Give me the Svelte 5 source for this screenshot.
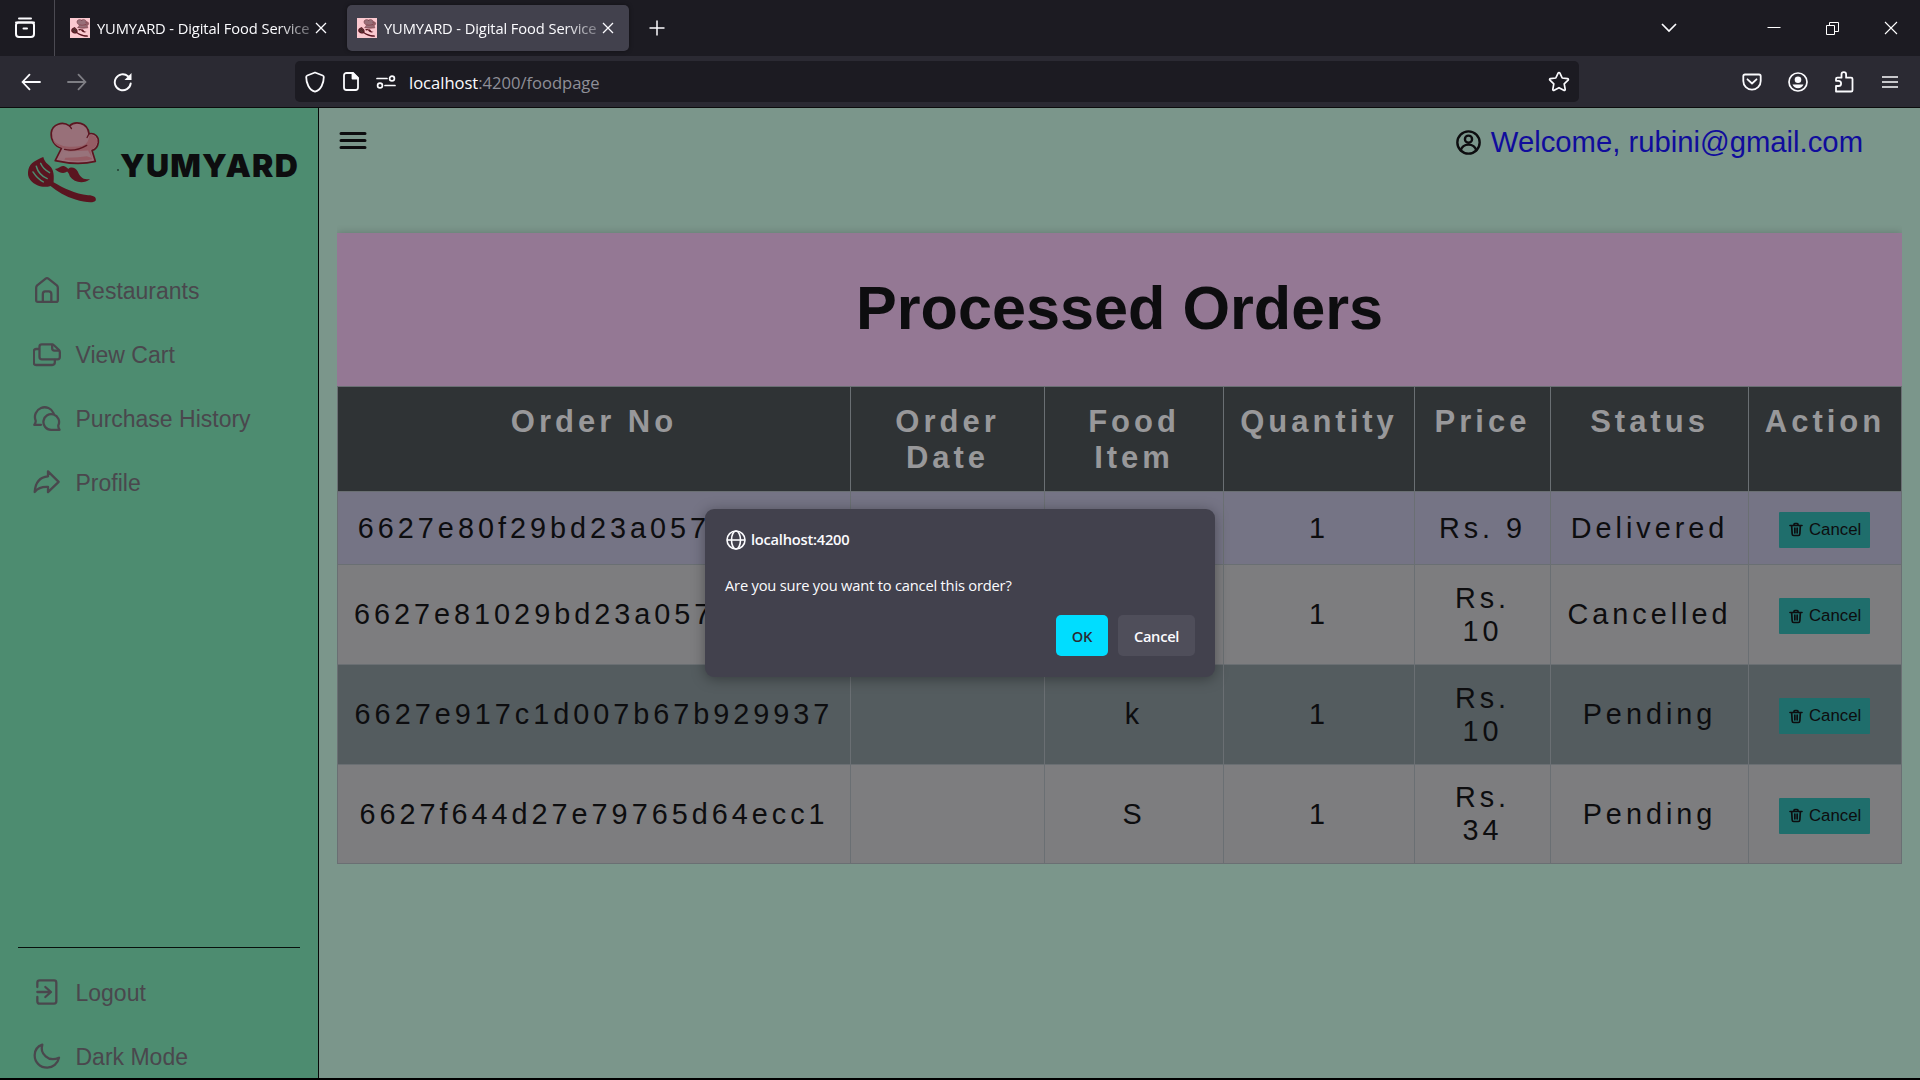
<script>
  const tabs = [{ active: false }, { active: true }];

  const mainLinks = [
    { icon: 'home', label: 'Restaurants' },
    { icon: 'documents', label: 'View Cart' },
    { icon: 'chats', label: 'Purchase History' },
    { icon: 'redo', label: 'Profile' }
  ];
  const footLinks = [
    { icon: 'exit', label: 'Logout' },
    { icon: 'moon', label: 'Dark Mode' }
  ];

  const columns = ['Order No', 'Order Date', 'Food Item', 'Quantity', 'Price', 'Status', 'Action'];
  const orders = [
    { id: '6627e80f29bd23a057b92971', item: 'k', qty: 1, price: 9, status: 'Delivered', tone: 'lilac' },
    { id: '6627e81029bd23a057b92975', item: 'k', qty: 1, price: 10, status: 'Cancelled', tone: 'grey' },
    { id: '6627e917c1d007b67b929937', item: 'k', qty: 1, price: 10, status: 'Pending', tone: 'slate' },
    { id: '6627f644d27e79765d64ecc1', item: 'S', qty: 1, price: 34, status: 'Pending', tone: 'grey' }
  ];
</script>

{#snippet logo()}
  <g stroke-linejoin="round" stroke-linecap="round">
    <path d="M165 182 L184 144 C163 138 151 118 153 98 C156 72 187 62 208 77 C224 62 262 64 267 101 C284 97 297 110 295 127 C293 141 286 149 276 151 L286 184 C247 194 205 191 165 182Z" fill="#987079" stroke="#5c1520" stroke-width="5" />
    <path d="M158 118 C172 139 212 145 247 137 C264 132 266 117 268 105 C276 103 289 108 291 121 C291 138 282 147 271 149 L276 178 C250 184 224 184 193 179 L206 150 L184 143 C169 138 160 128 158 118Z" fill="#955c64" />
    <path d="M193 148 C216 154 239 148 260 136" fill="none" stroke="#5c1520" stroke-width="4" />
    <path d="M208 77 L214 85 M267 101 L261 112" fill="none" stroke="#5c1520" stroke-width="4" />
    <path d="M188 155 L264 151 L276 174 L260 169 L235 172 L178 174Z" fill="#98737b" />
    <path d="M129 171 C132 181 135 186 143 193 C158 204 163 219 160 247 C188 264 225 282 264 286 C282 286 290 293 287 302 C282 311 255 308 226 299 C196 290 171 275 151 258 C133 264 108 261 90 240 C82 230 82 219 84 209 C89 188 109 180 129 171Z" fill="#5a1520" />
    <path d="M121 190 C127 205 137 212 148 218 M108 199 C113 218 128 231 141 236 M98 216 C107 230 117 240 129 246" fill="none" stroke="#4d8c70" stroke-width="4.500" />
    <path d="M164 207 C177 207 181 195 193 199 C200 202 202 205 204 207 C213 199 226 202 233 215 C240 232 250 242 270 237 C251 254 222 248 209 229 C207 224 205 218 201 215 C192 222 177 220 164 207Z" fill="#5a1520" />
  </g>
{/snippet}

{#snippet icon(name)}
  <svg class="icon" viewBox="0 0 84 84" fill="none" stroke="currentColor" stroke-width="6.800" stroke-linecap="round" stroke-linejoin="round">
    {#if name === 'home'}
      <path d="M9.500 32q0-4 3-7L38 5q4-3 8 0l25.500 20q3 3 3 7v37.500q0 5-5 5h-55q-5 0-5-5Z" />
      <path d="M29.500 74V51q0-8 7-8h11q7.500 0 7.500 8v23" />
    {:else if name === 'documents'}
      <path d="M18 24h-8q-7.500 0-7.500 7v34q0 7 7 7h48q8 0 8-8v-7" />
      <path d="M26.500 10H57q3 0 5 2l16 15q2.500 2.500 2.500 6v15q0 7-7 7h-47q-7 0-7-7V17q0-7 7-7Z" />
      <path d="M57.500 12v10q0 7 7 7H77" />
    {:else if name === 'chats'}
      <path d="M62 25A29 29 0 1 0 8 47q1 5-4 12.500h20" />
      <path d="M54 74.500A23.500 23.500 0 1 1 76 61q-1 5 3.500 13.500Z" />
    {:else if name === 'redo'}
      <path d="M45 7l32 31.500L45 69.500V54C28 53 15 57 5 69 7 41 21 24 45 22Z" />
    {:else if name === 'exit'}
      <path d="M13 24V11q0-7 7-7h43q7 0 7 7v56q0 7-7 7H20q-7 0-7-7V54" />
      <path d="M13 39h40M37 24l17 15-17 15" />
    {:else if name === 'moon'}
      <path d="M28 5C24 18 27 31 38 40c10 9 25 11 40 4-4 18-18 30-35 30C21 74 5 58 5 37 5 22 14 10 28 5Z" />
    {:else if name === 'trash'}
      <g stroke-width="10"><path d="M16 20l3 49q.5 9 9 9h28q8.500 0 9-9l3-49M6 18h72M30 16v-6q0-4 5-4h14q5 0 5 4v6M35 34v29M49 34v29" /></g>
    {:else if name === 'person'}
      <g stroke-width="8"><circle cx="42" cy="42" r="37.500" /><circle cx="42" cy="31" r="12" /><path d="M16 68C20 54 30 49 42 49s22 5 26 19" /></g>
    {/if}
  </svg>
{/snippet}

<div class="window">
  <header class="tabbar">
    <div class="recent">
      <svg width="22" height="22" viewBox="0 0 22 22" fill="none" stroke="#fbfbfe" stroke-width="2" stroke-linecap="round">
        <path d="M5 1.500h12M2 5.500h18" />
        <path d="M2 8v9a3 3 0 0 0 3 3h12a3 3 0 0 0 3-3V8a2.500 2.500 0 0 0-2.500-2.500h-13A2.500 2.500 0 0 0 2 8Z" />
        <path d="M9.500 11.500h3.500" />
      </svg>
    </div>
    {#each tabs as tab}
      <div class="tab" class:active={tab.active}>
        <svg class="favicon" viewBox="68 48 244 276" preserveAspectRatio="none">
          <rect x="68" y="48" width="244" height="276" fill="#fbc9d0" />
          {@render logo()}
        </svg>
        <span class="tab-title">YUMYARD - Digital Food Service</span>
        <svg class="tab-close" width="12" height="12" viewBox="0 0 12 12" stroke="#fbfbfe" stroke-width="1.300"><path d="M1 1l10 10M11 1L1 11" /></svg>
      </div>
    {/each}
    <svg class="plus" width="16" height="16" viewBox="0 0 16 16" stroke="#fbfbfe" stroke-width="1.500"><path d="M8 .5v15M.5 8h15" /></svg>
    <div class="controls">
      <svg width="18" height="12" viewBox="0 0 18 12" fill="none" stroke="#fbfbfe" stroke-width="1.700"><path d="M2 2l7 7 7-7" /></svg>
      <svg width="14" height="14" viewBox="0 0 14 14" stroke="#fff"><path d="M.5 6.500h13" /></svg>
      <svg width="13" height="14" viewBox="0 0 13 14" fill="none" stroke="#fff"><path d="M.5 4.500h8v9h-8zM3.500 4.500v-3h9v9h-4" /></svg>
      <svg width="14" height="14" viewBox="0 0 14 14" stroke="#fff" stroke-width="1.100"><path d="M1 1l12 12M13 1L1 13" /></svg>
    </div>
  </header>

  <nav class="toolbar">
    <div class="history">
      <svg width="20" height="18" viewBox="0 0 20 18" fill="none" stroke="#fbfbfe" stroke-width="1.800" stroke-linecap="round" stroke-linejoin="round"><path d="M19 9H1.500M8.500 1.700L1.500 9l7 7.300" /></svg>
      <svg class="dim" width="20" height="18" viewBox="0 0 20 18" fill="none" stroke="#fbfbfe" stroke-width="1.800" stroke-linecap="round" stroke-linejoin="round"><path d="M1 9h17.500M11.500 1.700l7 7.300-7 7.300" /></svg>
      <svg width="20" height="20" viewBox="0 0 20 20" fill="none" stroke="#fbfbfe" stroke-width="1.900" stroke-linecap="round"><path d="M17.700 11.500A8 8 0 1 1 15 4.200" /><path d="M18.500 1v7h-7z" fill="#fbfbfe" stroke="none" /></svg>
    </div>
    <div class="urlbar">
      <svg width="20" height="22" viewBox="0 0 20 22" fill="none" stroke="#fbfbfe" stroke-width="1.800" stroke-linejoin="round"><path d="M10 1.500l7.700 3c.8.300 1.100.8 1.100 1.500C18.800 12 16 19 10 20.700 4 19 1.200 12 1.200 6c0-.7.300-1.200 1.100-1.500z" /></svg>
      <svg width="16" height="19" viewBox="0 0 16 19" fill="none" stroke="#fbfbfe" stroke-width="1.800" stroke-linejoin="round"><path d="M3.500 1H10l5 5v9.500a2.500 2.500 0 0 1-2.500 2.500h-9A2.500 2.500 0 0 1 1 15.500v-12A2.500 2.500 0 0 1 3.500 1Z" /><path d="M9.500 1v5.500H15z" fill="#fbfbfe" /></svg>
      <svg width="20" height="14" viewBox="0 0 20 14" fill="none" stroke="#fbfbfe" stroke-width="1.700" stroke-linecap="round"><path d="M1 3.500h10M9 10.500h10" /><circle cx="16" cy="3.500" r="2.400" /><circle cx="4" cy="10.500" r="2.400" /></svg>
      <span class="url"><b>localhost</b>:4200/foodpage</span>
      <svg class="star" width="22" height="21" viewBox="0 0 22 21" fill="none" stroke="#fbfbfe" stroke-width="1.700" stroke-linejoin="round"><path d="M11 1.500c.4 0 .7.200.9.600l2.300 4.900 5.300.6c.9.100 1.200 1 .6 1.600l-3.900 3.700 1 5.400c.1.900-.7 1.400-1.400 1L11 16.700l-4.800 2.600c-.7.400-1.500-.1-1.400-1l1-5.400L1.900 9.200c-.6-.6-.3-1.500.6-1.600L7.800 7l2.300-4.900c.2-.4.500-.6.900-.6Z" /></svg>
    </div>
    <div class="extras">
      <svg width="20" height="18" viewBox="0 0 20 18" fill="none" stroke="#fbfbfe" stroke-width="1.800" stroke-linecap="round" stroke-linejoin="round"><path d="M3 1.500h14c1.100 0 1.700.7 1.700 1.700V8a8.700 8.700 0 0 1-17.400 0V3.200c0-1 .6-1.700 1.700-1.700Z" /><path d="M5.500 6.300L10 10.500l4.500-4.200" /></svg>
      <svg width="20" height="20" viewBox="0 0 20 20" fill="none" stroke="#fbfbfe" stroke-width="1.700"><circle cx="10" cy="10" r="9" /><circle cx="10" cy="7.700" r="3.300" fill="#fbfbfe" stroke="none" /><path d="M4.500 12.500h11c-.8 2.200-3 3.800-5.500 3.800s-4.700-1.600-5.500-3.800Z" fill="#fbfbfe" stroke="none" /></svg>
      <svg width="20" height="22" viewBox="0 0 20 22" fill="none" stroke="#fbfbfe" stroke-width="1.800" stroke-linejoin="round"><path d="M2 20.500V15h2.500a2.600 2.600 0 0 0 0-5.200H2V8c0-.8.500-1.300 1.300-1.300h4.200V3.500a2.300 2.300 0 0 1 4.600 0v3.200h5c.9 0 1.400.5 1.400 1.300v11.200c0 .9-.5 1.300-1.400 1.300Z" /></svg>
      <svg width="16" height="14" viewBox="0 0 16 14" stroke="#fbfbfe" stroke-width="1.500"><path d="M0 2h16M0 7h16M0 12h16" /></svg>
    </div>
  </nav>

  <div class="app">
    <aside>
      <div class="brand">
        <svg class="brand-logo" viewBox="80 60 220 252">{@render logo()}</svg>
        <span class="brand-dot"></span>
        <span class="brand-name">YUMYARD</span>
      </div>
      <ul class="links">
        {#each mainLinks as link}
          <li>{@render icon(link.icon)}<span>{link.label}</span></li>
        {/each}
      </ul>
      <ul class="links foot">
        {#each footLinks as link}
          <li>{@render icon(link.icon)}<span>{link.label}</span></li>
        {/each}
      </ul>
    </aside>

    <main>
      <div class="topline">
        <svg class="burger" width="28" height="18" viewBox="0 0 28 18" stroke="#0d0d0f" stroke-width="3" stroke-linecap="round"><path d="M2 1.500h24M2 8.500h24M2 15.500h24" /></svg>
        <div class="welcome">{@render icon('person')}<span>Welcome, rubini@gmail.com</span></div>
      </div>

      <section class="orders">
        <h1>Processed Orders</h1>
        <table>
          <colgroup>
            <col class="c-id" /><col class="c-date" /><col class="c-item" /><col class="c-qty" /><col class="c-price" /><col class="c-status" /><col class="c-action" />
          </colgroup>
          <thead>
            <tr>
              {#each columns as column}<th>{column}</th>{/each}
            </tr>
          </thead>
          <tbody>
            {#each orders as order}
              <tr class={order.tone}>
                <td>{order.id}</td>
                <td></td>
                <td>{order.item}</td>
                <td>{order.qty}</td>
                <td>Rs. {order.price}</td>
                <td>{order.status}</td>
                <td><button class="cancel">{@render icon('trash')}<span>Cancel</span></button></td>
              </tr>
            {/each}
          </tbody>
        </table>
      </section>
    </main>
  </div>

  <div class="dialog">
    <div class="origin">
      <svg width="20" height="20" viewBox="0 0 20 20" fill="none" stroke="#fbfbfe" stroke-width="1.600"><circle cx="10" cy="10" r="9" /><ellipse cx="10" cy="10" rx="4.500" ry="9" /><path d="M1 10h18" /></svg>
      <span>localhost:4200</span>
    </div>
    <p>Are you sure you want to cancel this order?</p>
    <div class="actions">
      <button class="ok">OK</button>
      <button class="dismiss">Cancel</button>
    </div>
  </div>
</div>

<style>
  :global(body) { margin: 0; background: #000; overflow: hidden; }
  * { box-sizing: border-box; }
  svg { display: block; flex: none; }
  button { border: 0; margin: 0; padding: 0; font: inherit; }

  .window {
    position: relative;
    display: flex;
    flex-direction: column;
    width: 1920px;
    height: 1080px;
    padding-bottom: 2px;
    background: #000;
    font-family: "Liberation Sans", Arial, sans-serif;
    color: #0d0d0f;
  }

  /* browser chrome */
  .tabbar, .toolbar, .dialog { font-family: "Open Sans", "Noto Sans", sans-serif; color: #fbfbfe; }
  .tabbar { display: flex; align-items: center; height: 56px; flex: none; background: #1c1b22; }
  .recent { display: flex; align-items: center; width: 55px; height: 56px; padding-left: 14px; border-right: 1px solid #4b4a52; }
  .tab { display: flex; align-items: center; width: 282px; height: 46px; margin-right: 5px; padding-left: 10px; border-radius: 5px; }
  .recent + .tab { margin-left: 5px; }
  .tab.active { background: #42414d; box-shadow: 0 0 4px rgba(0, 0, 0, .4); }
  .favicon { width: 20px; height: 20px; }
  .tab-title {
    width: 215px; margin-left: 7px; overflow: hidden; white-space: nowrap;
    font-size: 14.700px; letter-spacing: -.1px;
    mask-image: linear-gradient(to right, #000 180px, rgba(0, 0, 0, .3) 214px);
  }
  .tab-close { margin-left: 3px; }
  .plus { margin-left: 15px; }
  .controls { display: flex; align-items: center; margin-left: auto; padding-right: 22px; }
  .controls svg:nth-child(2) { margin-left: 89px; }
  .controls svg:nth-child(3) { margin-left: 45px; }
  .controls svg:nth-child(4) { margin-left: 45px; }

  .toolbar { display: flex; align-items: center; height: 52px; flex: none; background: #2b2a33; border-bottom: 1px solid #0c0c0d; }
  .history { display: flex; align-items: center; gap: 26px; width: 295px; padding: 1px 0 0 21px; }
  .dim { opacity: .4; }
  .urlbar { display: flex; align-items: center; width: 1284px; height: 41px; padding-left: 10px; border-radius: 5px; background: #1c1b22; }
  .urlbar svg:nth-child(2) { margin-left: 18px; }
  .urlbar svg:nth-child(3) { margin-left: 17px; }
  .url { margin-left: 13px; padding-top: 1px; font-size: 16.600px; letter-spacing: -.03px; color: #8f8f98; white-space: nowrap; }
  .url b { font-weight: 400; color: #fbfbfe; }
  .urlbar .star { margin-left: auto; margin-right: 9px; }
  .extras { display: flex; align-items: center; margin-left: auto; padding-right: 22px; gap: 26px; }
  .extras svg:last-child { margin-left: 2px; }

  /* page */
  .app { display: flex; flex: 1; min-height: 0; }
  aside { display: flex; flex-direction: column; width: 319px; border-right: 1px solid #060808; background: #4d8c70; overflow: hidden; }
  .brand { display: flex; height: 130px; padding: 12px 0 0 27px; }
  .brand-logo { width: 73px; height: 84px; }
  .brand-dot { width: 2px; height: 2px; margin: 49px 0 0 17px; background: #2c5241; }
  .brand-name { margin: 26px 0 0 1px; font: 900 32px/40px "Inter", sans-serif; letter-spacing: 1.200px; }
  .links { list-style: none; margin: 0; padding: 21px 0 0; color: #4a474d; font-size: 23px; }
  .links li { display: flex; align-items: center; height: 64px; padding-left: 33px; }
  .links li span { margin-left: 14.500px; }
  .links .icon { width: 28px; height: 28px; }
  .foot { margin: auto 18px -11px; padding: 13px 0 0; border-top: 1px solid #08100c; }
  .foot li { padding-left: 15px; }

  main { flex: 1; padding: 0 18px; background: #7b968b; overflow: hidden; }
  .topline { display: flex; align-items: flex-start; justify-content: space-between; height: 125px; padding: 24px 39px 0 2px; }
  .welcome { display: flex; align-items: center; height: 20px; font-size: 29.250px; color: #100c9c; white-space: nowrap; }
  .welcome .icon { width: 25px; height: 25px; margin-right: 10px; color: #0d0d0f; }

  .orders { width: 1565px; background: #7d7d7f; box-shadow: 0 0 8px rgba(0, 0, 0, .2); clip-path: inset(-12px 0 0 0); }
  h1 { display: flex; align-items: center; justify-content: center; height: 153px; margin: 0; padding-bottom: 3px; background: #947894; font-size: 61.200px; }
  table { width: 1565px; table-layout: fixed; border-spacing: 0; border: solid #6a6f73; border-width: 0 1px 1px 0; }
  .c-id { width: 513px; }
  .c-date { width: 194px; }
  .c-item { width: 179px; }
  .c-qty { width: 191px; }
  .c-price { width: 136px; }
  .c-status { width: 198px; }
  .c-action { width: 153px; }
  th, td { border: solid #6a6f73; border-width: 1px 0 0 1px; text-align: center; letter-spacing: 4px; }
  th { height: 105px; padding: 17px 12px 0; background: #2f3335; color: #98989a; font-size: 31px; line-height: 36px; vertical-align: top; }
  td { height: 100px; padding: 0 16px; font-size: 28.800px; line-height: 33px; vertical-align: middle; }
  .lilac td { height: 73px; background: #757485; }
  .grey td { background: #7d7d7f; }
  .slate td { background: #545c5f; }
  tr:last-child td { height: 99px; }
  .cancel { display: flex; align-items: center; width: 91px; height: 36px; margin: 3px auto 0; padding-left: 10px; border-radius: 1px; background: #1f6e6c; color: #0d0d0f; font-size: 16.800px; line-height: 20px; }
  .cancel .icon { width: 14px; height: 15px; margin-right: 6px; }
  td:last-child { padding: 0 1px 0 0; }

  .dialog { position: absolute; left: 705px; top: 509px; width: 510px; height: 168px; padding: 20px; border-radius: 9px; background: #42414d; box-shadow: 0 2px 14px rgba(0, 0, 0, .35); font-size: 14.700px; }
  .origin { display: flex; align-items: center; gap: 5px; height: 22px; padding-left: 1px; font-weight: 600; letter-spacing: -.25px; }
  .origin span { padding-bottom: 2px; }
  .dialog p { margin: 23px 0 0; line-height: 22px; letter-spacing: -.2px; }
  .actions { display: flex; justify-content: flex-end; gap: 10px; margin-top: 19px; }
  .actions button { height: 41px; border-radius: 5px; font-weight: 600; letter-spacing: -.3px; }
  .ok { width: 52px; background: #00ddff; color: #2b2a33; }
  .dismiss { width: 77px; background: #4f4e5a; color: #fbfbfe; }
</style>
